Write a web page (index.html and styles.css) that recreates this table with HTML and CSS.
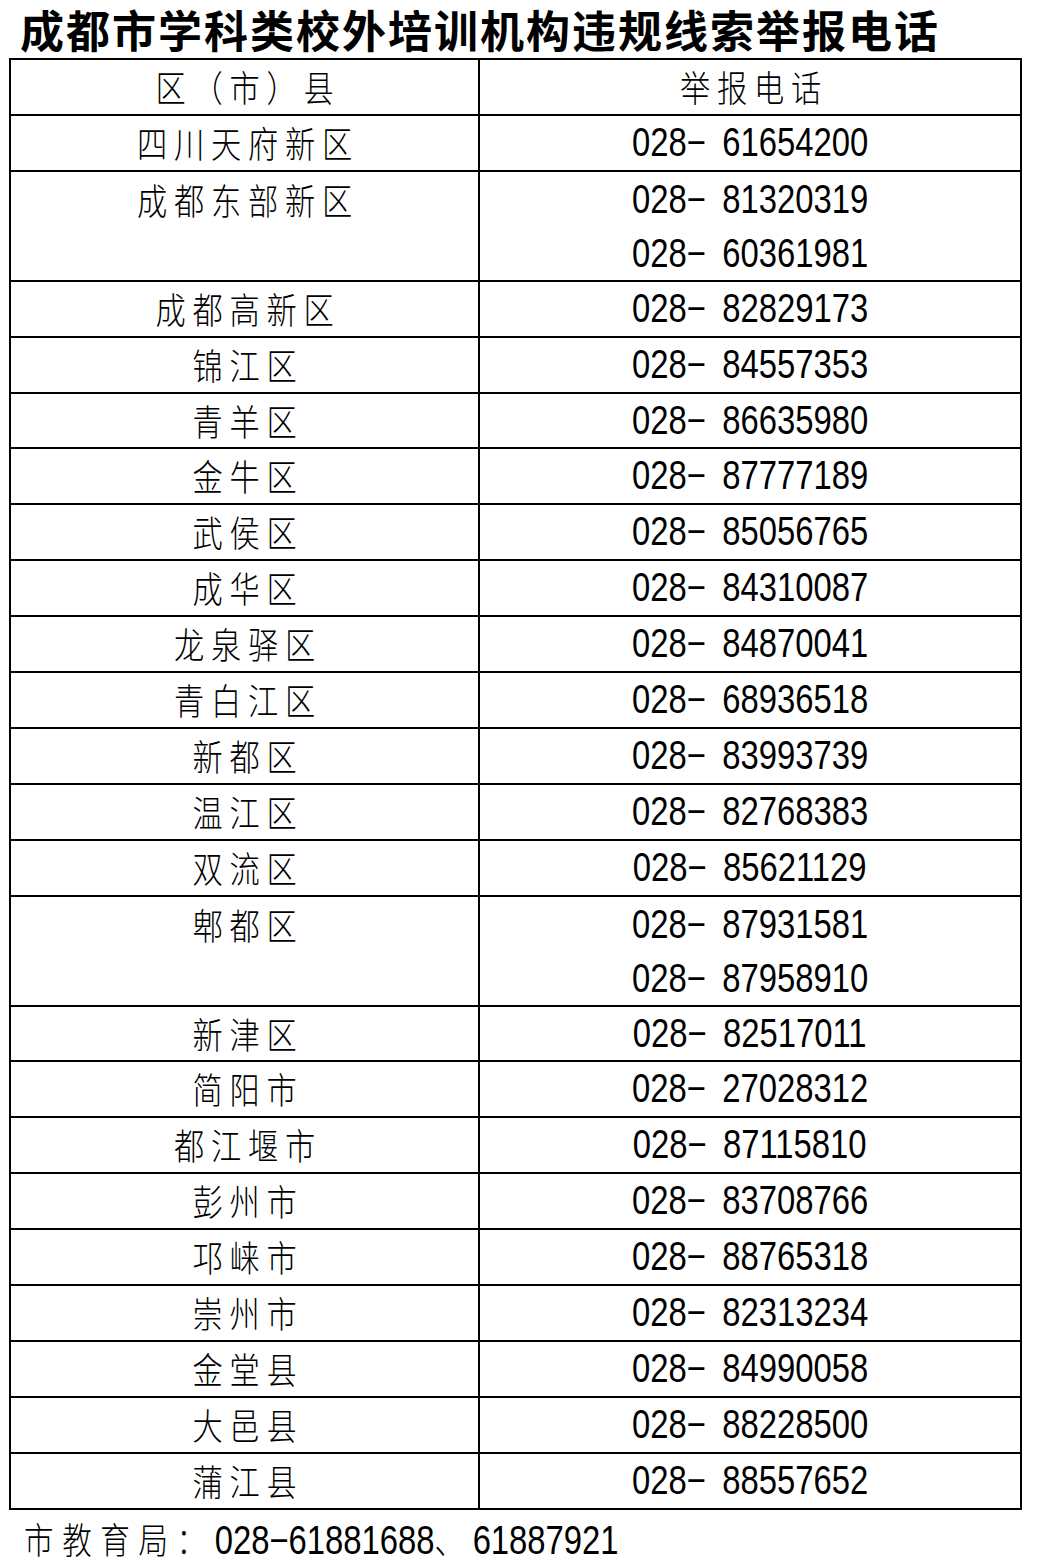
FILE: index.html
```html
<!DOCTYPE html>
<html lang="zh-CN">
<head>
<meta charset="utf-8">
<title>成都市学科类校外培训机构违规线索举报电话</title>
<link rel="stylesheet" href="styles.css">
</head>
<body>
<h1 class="title">成都市学科类校外培训机构违规线索举报电话</h1>
<div class="sheet">
  <div class="cell name"><span class="txt">区（市）县</span></div>
  <div class="cell name"><span class="txt">举报电话</span></div>

  <div class="cell name"><span class="txt">四川天府新区</span></div>
  <div class="cell phone"><span class="num">028−&ensp;61654200</span></div>

  <div class="cell name two"><span class="txt">成都东部新区</span></div>
  <div class="cell phone two"><div class="line"><span class="num">028−&ensp;81320319</span></div><div class="line"><span class="num">028−&ensp;60361981</span></div></div>

  <div class="cell name"><span class="txt">成都高新区</span></div>
  <div class="cell phone"><span class="num">028−&ensp;82829173</span></div>

  <div class="cell name"><span class="txt">锦江区</span></div>
  <div class="cell phone"><span class="num">028−&ensp;84557353</span></div>

  <div class="cell name"><span class="txt">青羊区</span></div>
  <div class="cell phone"><span class="num">028−&ensp;86635980</span></div>

  <div class="cell name"><span class="txt">金牛区</span></div>
  <div class="cell phone"><span class="num">028−&ensp;87777189</span></div>

  <div class="cell name"><span class="txt">武侯区</span></div>
  <div class="cell phone"><span class="num">028−&ensp;85056765</span></div>

  <div class="cell name"><span class="txt">成华区</span></div>
  <div class="cell phone"><span class="num">028−&ensp;84310087</span></div>

  <div class="cell name"><span class="txt">龙泉驿区</span></div>
  <div class="cell phone"><span class="num">028−&ensp;84870041</span></div>

  <div class="cell name"><span class="txt">青白江区</span></div>
  <div class="cell phone"><span class="num">028−&ensp;68936518</span></div>

  <div class="cell name"><span class="txt">新都区</span></div>
  <div class="cell phone"><span class="num">028−&ensp;83993739</span></div>

  <div class="cell name"><span class="txt">温江区</span></div>
  <div class="cell phone"><span class="num">028−&ensp;82768383</span></div>

  <div class="cell name"><span class="txt">双流区</span></div>
  <div class="cell phone"><span class="num">028−&ensp;85621129</span></div>

  <div class="cell name two"><span class="txt">郫都区</span></div>
  <div class="cell phone two"><div class="line"><span class="num">028−&ensp;87931581</span></div><div class="line"><span class="num">028−&ensp;87958910</span></div></div>

  <div class="cell name"><span class="txt">新津区</span></div>
  <div class="cell phone"><span class="num">028−&ensp;82517011</span></div>

  <div class="cell name"><span class="txt">简阳市</span></div>
  <div class="cell phone"><span class="num">028−&ensp;27028312</span></div>

  <div class="cell name"><span class="txt">都江堰市</span></div>
  <div class="cell phone"><span class="num">028−&ensp;87115810</span></div>

  <div class="cell name"><span class="txt">彭州市</span></div>
  <div class="cell phone"><span class="num">028−&ensp;83708766</span></div>

  <div class="cell name"><span class="txt">邛崃市</span></div>
  <div class="cell phone"><span class="num">028−&ensp;88765318</span></div>

  <div class="cell name"><span class="txt">崇州市</span></div>
  <div class="cell phone"><span class="num">028−&ensp;82313234</span></div>

  <div class="cell name"><span class="txt">金堂县</span></div>
  <div class="cell phone"><span class="num">028−&ensp;84990058</span></div>

  <div class="cell name"><span class="txt">大邑县</span></div>
  <div class="cell phone"><span class="num">028−&ensp;88228500</span></div>

  <div class="cell name"><span class="txt">蒲江县</span></div>
  <div class="cell phone"><span class="num">028−&ensp;88557652</span></div>
</div>
<p class="footer"><span class="footer-line"><span class="footer-label">市教育局：</span><span class="footer-num">028−61881688</span><span class="footer-label">、</span><span class="footer-num">61887921</span></span></p>
</body>
</html>
```
FILE: styles.css
```css
html, body {
  margin: 0;
  padding: 0;
  background: #fff;
  color: #000;
}

body {
  width: 1042px;
  font-family: "Noto Sans CJK SC", "Liberation Sans", sans-serif;
}

.title {
  margin: 0;
  height: 58px;
  line-height: 58px;
  padding-left: 20px;
  font-size: 44px;
  font-weight: 700;
  letter-spacing: 2px;
  white-space: nowrap;
}

.sheet {
  display: grid;
  grid-template-columns: 469px 542px;
  margin-left: 9px;
  width: 1011px;
  border-top: 2px solid #000;
  border-left: 2px solid #000;
}

.cell {
  border-right: 2px solid #000;
  border-bottom: 2px solid #000;
  text-align: center;
  line-height: 53.9px;
  height: 53.9px;
  white-space: nowrap;
}

.cell.two {
  height: 108px;
}

.name {
  font-family: "Noto Sans CJK SC", sans-serif;
  font-size: 36px;
  font-weight: 300;
}

.name.two {
  line-height: 54px;
}

.txt {
  display: inline-block;
  letter-spacing: 8px;
  margin-left: 8px;
  transform: scaleX(0.84);
}

.phone {
  font-family: "Liberation Sans", Arial, sans-serif;
  font-size: 40px;
}

.num {
  display: inline-block;
  transform: scaleX(0.82);
}

.phone .line {
  line-height: 54px;
  height: 54px;
}

.footer {
  margin: 0;
  padding: 2px 0 0 24px;
  height: 52px;
  line-height: 52px;
  white-space: nowrap;
}

.footer-line {
  display: inline-block;
  line-height: 52px;
  transform: scaleX(0.82);
  transform-origin: left center;
}

.footer-label {
  font-family: "Noto Sans CJK SC", sans-serif;
  font-size: 36px;
  font-weight: 300;
  letter-spacing: 10.5px;
}

.footer-num {
  font-family: "Liberation Sans", Arial, sans-serif;
  font-size: 40px;
}
```
